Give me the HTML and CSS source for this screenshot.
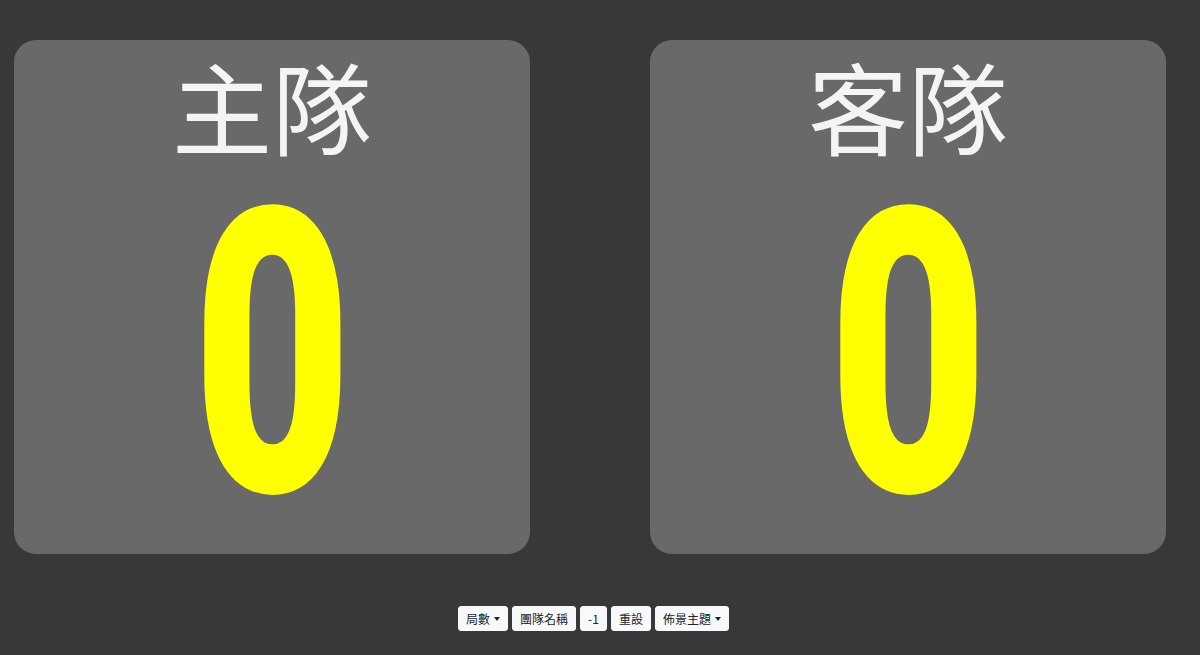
FILE: index.html
```html
<!DOCTYPE html>
<html lang="zh-Hant">
<head>
<meta charset="utf-8">
<title>計分板</title>
<link rel="stylesheet" href="styles.css">
</head>
<body>
<div class="board">
  <div class="teams">
    <section class="card">
      <h1 class="name">主隊</h1>
      <div class="score"><span class="digit">0</span></div>
    </section>
    <section class="card">
      <h1 class="name">客隊</h1>
      <div class="score"><span class="digit">0</span></div>
    </section>
  </div>
  <div class="controls">
    <button class="btn">局數<span class="caret"></span></button>
    <button class="btn">團隊名稱</button>
    <button class="btn">-1</button>
    <button class="btn">重設</button>
    <button class="btn">佈景主題<span class="caret"></span></button>
  </div>
</div>
</body>
</html>
```
FILE: styles.css
```css
html, body {
  margin: 0;
  padding: 0;
  background: #383838;
  height: 100%;
  overflow: hidden;
}
body {
  font-family: "Noto Sans CJK TC", "Noto Sans", sans-serif;
}
.board {
  display: flex;
  flex-direction: column;
  padding: 40px 34px 0 14px;
}
.teams {
  display: flex;
  justify-content: space-between;
}
.card {
  width: 516px;
  height: 514px;
  background: #696969;
  border-radius: 22px;
  display: flex;
  flex-direction: column;
  align-items: center;
}
.name {
  margin: 11px 0 0;
  font-size: 100px;
  font-weight: 400;
  line-height: 108px;
  color: #f4f4f4;
}
.score {
  margin-top: 46px;
  height: 300px;
  line-height: 300px;
  text-align: center;
}
.digit {
  display: inline-block;
  font-family: Roboto, "Liberation Sans", sans-serif;
  font-weight: 900;
  font-size: 398px;
  line-height: 300px;
  color: #ffff00;
  transform: scaleX(0.69);
}
.controls {
  display: flex;
  justify-content: center;
  gap: 4px;
  margin-top: 52px;
  padding-left: 7px;
}
.btn {
  font-family: "Noto Sans CJK TC", "Noto Sans", sans-serif;
  font-size: 12px;
  height: 25px;
  padding: 0 7px;
  background: #f8f9fa;
  color: #212529;
  border: 1px solid #f8f9fa;
  border-radius: 3px;
  display: inline-flex;
  align-items: center;
}
.caret {
  display: inline-block;
  margin-left: 4px;
  border-top: 4px solid #212529;
  border-left: 3.5px solid transparent;
  border-right: 3.5px solid transparent;
}
```
